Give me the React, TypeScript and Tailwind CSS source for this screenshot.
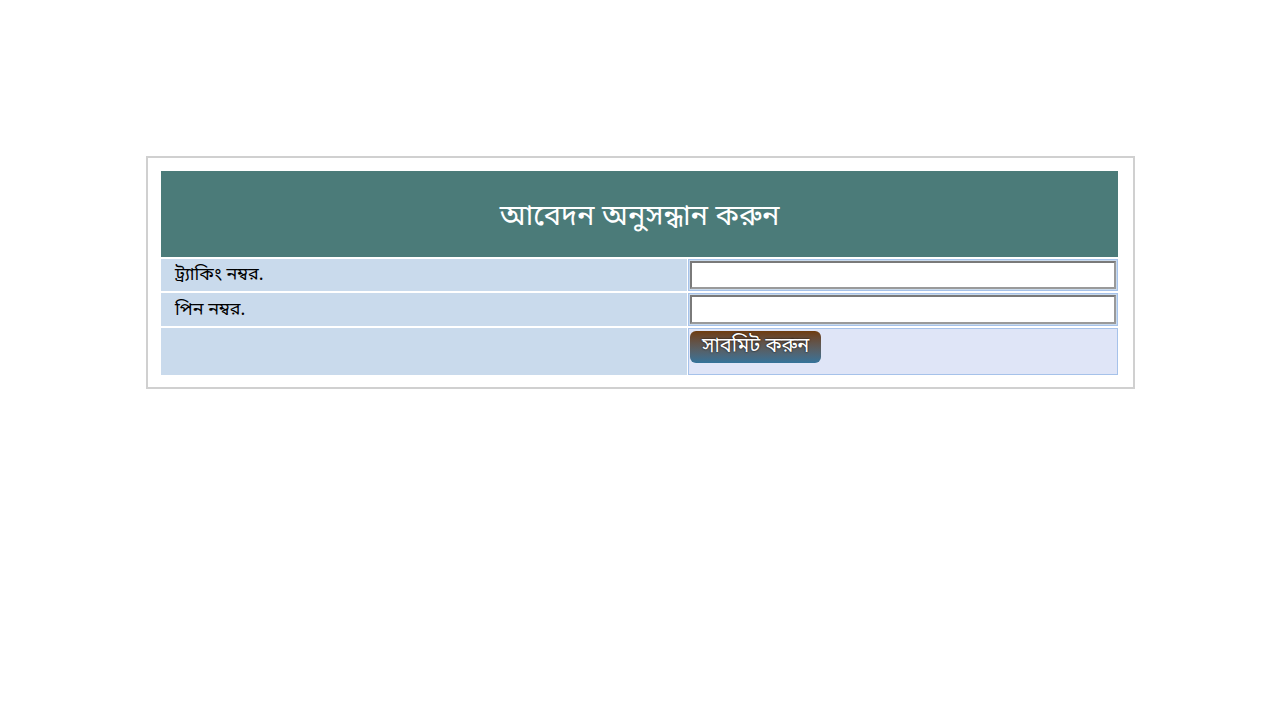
import React from 'react';

const bn = { fontFamily: '"Noto Sans Bengali", "Lohit Bengali", "Vrinda", "FreeSans", "Noto Sans", sans-serif' };

export default function App() {
  return (
    <div className="min-h-screen bg-white pt-[156px]" style={bn}>
      <div className="mx-[146px] w-[989px] border-2 border-[#d0d0d0] pt-[13px] pb-[12px] pl-[13px] pr-[15px]">
        <table className="w-full border-separate border-spacing-0 text-[18px] font-normal text-black">
          <tbody>
            <tr>
              <td colSpan={2} className="h-[86px] bg-[#4b7b79] pt-[8px] text-center align-middle text-[29px] text-white">
                আবেদন অনুসন্ধান করুন
              </td>
            </tr>
            <tr>
              <td className="h-[2px] p-0" colSpan={2} />
            </tr>
            <tr>
              <td className="h-[32px] w-[526px] bg-[#c9daec] pl-[14px] align-middle leading-none">ট্র্যাকিং নম্বর.</td>
              <td className="border-l border-white bg-[#c9daec] p-0">
                <div className="border border-[#a6c2ea] p-[1px]">
                  <input className="block h-[28px] w-full border-2 border-t-[#7a7a7a] border-l-[#7a7a7a] border-b-[#9a9a9a] border-r-[#9a9a9a] bg-white outline-none" />
                </div>
              </td>
            </tr>
            <tr>
              <td className="h-[2px] p-0" colSpan={2} />
            </tr>
            <tr>
              <td className="h-[33px] bg-[#c9daec] pl-[14px] align-middle leading-none">পিন নম্বর.</td>
              <td className="border-l border-white bg-[#c9daec] p-0">
                <div className="border border-[#a6c2ea] p-[1px]">
                  <input className="block h-[29px] w-full border-2 border-t-[#7a7a7a] border-l-[#7a7a7a] border-b-[#9a9a9a] border-r-[#9a9a9a] bg-white outline-none" />
                </div>
              </td>
            </tr>
            <tr>
              <td className="h-[2px] p-0" colSpan={2} />
            </tr>
            <tr>
              <td className="h-[47px] bg-[#c9daec]" />
              <td className="border-l border-white bg-[#c9daec] p-0 align-top">
                <div className="h-[47px] border border-[#a6c2ea] bg-[#dfe5f7] px-[1px] pt-[2px]">
                  <button className="h-[32px] rounded-[6px] bg-gradient-to-b from-[#6e3c0c] to-[#33739a] px-[12px] text-[20px] leading-none text-white [text-shadow:0_0_2px_#000]">
                    সাবমিট করুন
                  </button>
                </div>
              </td>
            </tr>
          </tbody>
        </table>
      </div>
    </div>
  );
}
